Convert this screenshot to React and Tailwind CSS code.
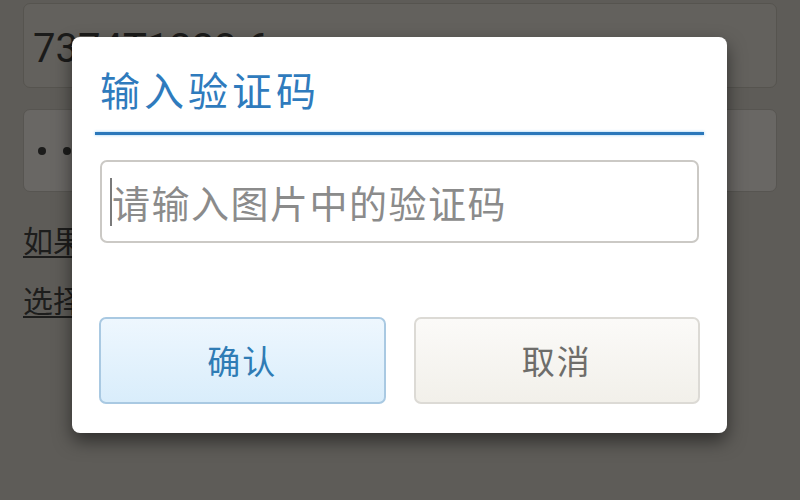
import React from "react";

const CJK = { fontFamily: '"Noto Sans CJK SC", "Noto Sans", sans-serif' };

export default function App() {
  return (
    <div className="relative w-[800px] h-[500px] overflow-hidden bg-[#5e5c58]" style={CJK}>
      {/* background page */}
      <div className="flex flex-col px-[23px] pt-[3px]">
        <div className="h-[85px] rounded-[7px] bg-[#63615d] border border-[#56544f] flex items-center pl-[9px] pt-[6px]">
          <span className="text-[40px] leading-[30px] text-[#1b1b1a]" style={{ fontFamily: '"Roboto", "Noto Sans", sans-serif' }}>
            7374T1223 6
          </span>
        </div>
        <div className="mt-[21px] h-[83px] rounded-[7px] bg-[#696764] border border-[#575551] flex items-center pl-[14px] gap-[17px]">
          <span className="w-[8px] h-[8px] rounded-full bg-[#1c1c1b]" />
          <span className="w-[8px] h-[8px] rounded-full bg-[#1c1c1b]" />
          <span className="w-[8px] h-[8px] rounded-full bg-[#1c1c1b]" />
          <span className="w-[8px] h-[8px] rounded-full bg-[#1c1c1b]" />
        </div>
        <div className="mt-[27px] text-[30px] leading-[40px] text-[#1d1d1c] underline underline-offset-[4px] decoration-[2px]">
          如果
        </div>
        <div className="mt-[20px] text-[30px] leading-[40px] text-[#1d1d1c] underline underline-offset-[4px] decoration-[2px]">
          选择
        </div>
      </div>

      {/* dialog overlay */}
      <div className="absolute left-[72px] top-[37px] w-[655px] h-[396px] bg-white rounded-[8px] shadow-[0_8px_18px_rgba(0,0,0,0.5)] flex flex-col">
        <div className="pt-[30px] px-[28px] h-[74px] text-[40px] leading-[44px] tracking-[4px] text-[#2f7bbd]">
          输入验证码
        </div>
        <div className="mt-[21px] mx-[23px] h-[3px] bg-[#2b78bb] shadow-[0_0_3px_rgba(120,190,240,0.8)]" />
        <div className="mt-[25px] mx-[28px] h-[83px] rounded-[7px] border-2 border-[#cbc9c5] bg-white flex items-center pl-[8px]">
          <span className="w-[2px] h-[48px] bg-[#7a7a7a]" />
          <span className="text-[38px] leading-none tracking-[1.5px] text-[#8b8b8b]">请输入图片中的验证码</span>
        </div>
        <div className="mt-[74px] mx-[27px] flex gap-[28px]">
          <div className="w-[287px] h-[87px] rounded-[7px] border-2 border-[#a9c9e2] bg-gradient-to-b from-[#eef7fe] to-[#d9edfb] flex items-center justify-center">
            <span className="text-[33px] leading-none tracking-[2px] text-[#2f7cb5]">确认</span>
          </div>
          <div className="w-[287px] h-[87px] rounded-[7px] border-2 border-[#dcdad5] bg-gradient-to-b from-[#fbfaf8] to-[#f2f0ea] flex items-center justify-center">
            <span className="text-[33px] leading-none tracking-[2px] text-[#6e6d6a]">取消</span>
          </div>
        </div>
      </div>
    </div>
  );
}
